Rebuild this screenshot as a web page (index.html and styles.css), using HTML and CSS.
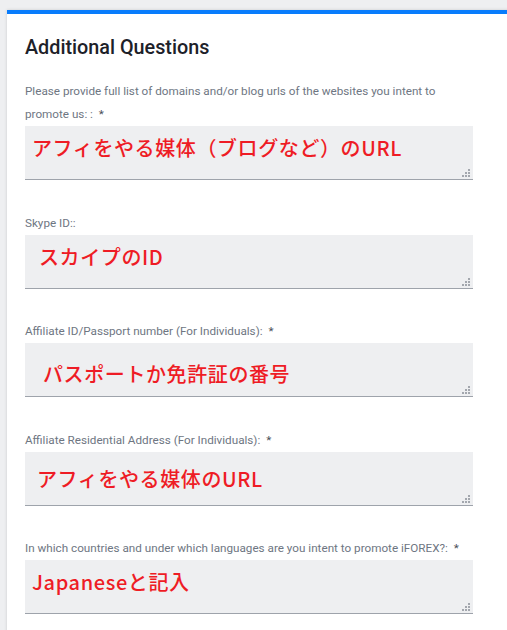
FILE: index.html
```html
<!DOCTYPE html>
<html lang="ja">
<head>
  <meta charset="UTF-8">
  <title>Additional Questions</title>
  <link rel="stylesheet" href="styles.css">
</head>
<body>

  <div class="form-card">
    <h2>Additional Questions</h2>

    <div class="question">
      <label>Please provide full list of domains and/or blog urls of the websites you intent to promote us: : <span class="req">*</span></label>
      <div class="answer">
        <span class="note note-1">アフィをやる媒体（ブログなど）のURL</span>
      </div>
    </div>

    <div class="question">
      <label>Skype ID::</label>
      <div class="answer">
        <span class="note note-2">スカイプのID</span>
      </div>
    </div>

    <div class="question">
      <label>Affiliate ID/Passport number (For Individuals): <span class="req">*</span></label>
      <div class="answer">
        <span class="note note-3">パスポートか免許証の番号</span>
      </div>
    </div>

    <div class="question">
      <label>Affiliate Residential Address (For Individuals): <span class="req">*</span></label>
      <div class="answer">
        <span class="note note-4">アフィをやる媒体のURL</span>
      </div>
    </div>

    <div class="question">
      <label>In which countries and under which languages are you intent to promote iFOREX?: <span class="req">*</span></label>
      <div class="answer">
        <span class="note note-5">Japaneseと記入</span>
      </div>
    </div>
  </div>

</body>
</html>
```

FILE: styles.css
```css
body {
  font-family: Roboto, "Noto Sans", Arial, sans-serif;
  margin: 0;
  padding: 10px 0 0 7px;
  background-color: #eeeff1;
  overflow: hidden;
  height: 620px;
}

.form-card {
  background-color: #fff;
  border-top: 4px solid #087cfc;
  box-shadow: 0 0 3px rgba(0, 0, 0, 0.15);
  margin-right: -30px;
  padding: 22px 0 40px 18px;
}

h2 {
  margin: 0 0 20px;
  font-size: 19.8px;
  line-height: 24px;
  font-weight: 500;
  color: #1d2129;
}

.question {
  width: 448px;
  margin-bottom: 31.5px;
}

label {
  display: block;
  font-size: 11.7px;
  line-height: 23px;
  color: #6e7682;
}

.req {
  color: #4a4f57;
  margin-left: 3px;
}

.answer {
  position: relative;
  height: 53px;
  background-color: #eeeff1;
  border-bottom: 1px solid #9ea3ab;
}

/* resize grip dots */
.answer::after {
  content: "";
  position: absolute;
  right: 3px;
  bottom: 2px;
  width: 2px;
  height: 2px;
  background: #a3a7ae;
  box-shadow: -3px 0 #a3a7ae, -6px 0 #a3a7ae, 0 -3px #a3a7ae, -3px -3px #a3a7ae, 0 -6px #a3a7ae;
}

.note {
  position: absolute;
  font-family: "Noto Sans CJK JP", sans-serif;
  font-size: 20px;
  font-weight: 500;
  line-height: 24px;
  letter-spacing: 0.6px;
  color: #ee1c25;
}

.note-1 { left: 7px; top: 10px; }
.note-2 { left: 14px; top: 10px; }
.note-3 { left: 18px; top: 19px; }
.note-4 { left: 12px; top: 15px; }
.note-5 { left: 7px; top: 10px; }
```
